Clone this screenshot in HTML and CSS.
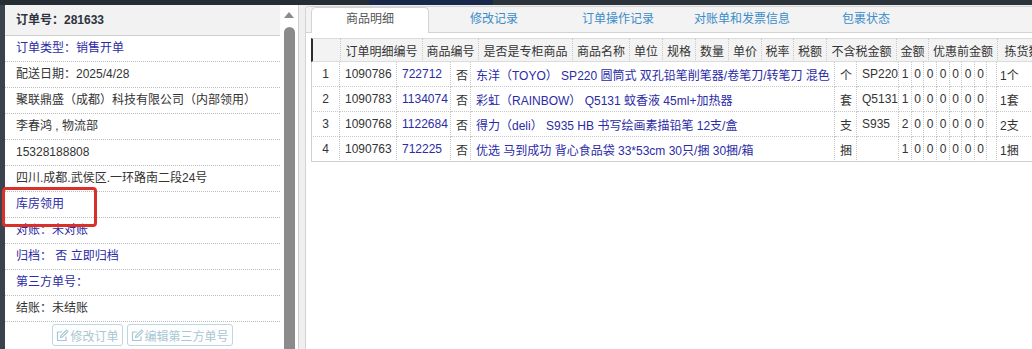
FILE: index.html
```html
<!DOCTYPE html>
<html lang="zh-CN">
<head>
<meta charset="utf-8">
<title>订单详情</title>
<link rel="stylesheet" href="styles.css">
</head>
<body>
<div class="topbar"><span class="seg-a"></span><span class="seg-b"></span><span class="seg-c"></span></div>
<div class="main">
  <div class="strip"></div>
  <aside class="sidebar">
    <div class="row head">订单号：281633</div>
    <div class="row blue">订单类型：销售开单</div>
    <div class="row">配送日期：2025/4/28</div>
    <div class="row">聚联鼎盛（成都）科技有限公司（内部领用）</div>
    <div class="row">李春鸿 , 物流部</div>
    <div class="row">15328188808</div>
    <div class="row">四川.成都.武侯区.一环路南二段24号</div>
    <div class="row blue">库房领用</div>
    <div class="row blue">对账：未对账</div>
    <div class="row blue">归档： 否 立即归档</div>
    <div class="row blue">第三方单号：</div>
    <div class="row">结账：未结账</div>
    <div class="row btns">
      <button class="btn" type="button"><svg class="ico" width="13" height="13" viewBox="0 0 13 13"><path d="M10 7.5V11.5H1.5V3H6" fill="none" stroke="currentColor" stroke-width="1.2"/><path d="M4.5 8.5L5 6.5L10.5 1L12 2.5L6.5 8Z" fill="none" stroke="currentColor" stroke-width="1.1"/></svg>修改订单</button>
      <button class="btn" type="button"><svg class="ico" width="13" height="13" viewBox="0 0 13 13"><path d="M10 7.5V11.5H1.5V3H6" fill="none" stroke="currentColor" stroke-width="1.2"/><path d="M4.5 8.5L5 6.5L10.5 1L12 2.5L6.5 8Z" fill="none" stroke="currentColor" stroke-width="1.1"/></svg>编辑第三方单号</button>
    </div>
  </aside>
  <div class="scrollbar"><span class="arrow"></span><span class="thumb"></span></div>
  <div class="divider"></div>
  <section class="content">
    <div class="panel">
      <ul class="tabnav">
        <li class="active">商品明细</li>
        <li>修改记录</li>
        <li>订单操作记录</li>
        <li>对账单和发票信息</li>
        <li>包裹状态</li>
      </ul>
      <div class="grid">
        <table class="ghead">
          <colgroup>
            <col class="w30"><col class="w82"><col class="w56"><col class="w94"><col class="w57"><col class="w33"><col class="w33"><col class="w33"><col class="w33"><col class="w32"><col class="w33"><col class="w70"><col class="w32"><col class="w69"><col class="w62">
          </colgroup>
          <tr>
            <th></th><th>订单明细编号</th><th>商品编号</th><th>是否是专柜商品</th><th>商品名称</th><th>单位</th><th>规格</th><th>数量</th><th>单价</th><th>税率</th><th>税额</th><th>不含税金额</th><th>金额</th><th>优惠前金额</th><th>拣货数量</th>
          </tr>
        </table>
        <table class="gbody">
          <colgroup>
            <col class="w29"><col class="w57"><col class="w54"><col class="w20"><col class="w364"><col class="w22"><col class="w42"><col class="w13"><col class="w12"><col class="w13"><col class="w13"><col class="w12"><col class="w13"><col class="w12"><col class="w10"><col class="w60">
          </colgroup>
          <tr>
            <td class="rn">1</td><td>1090786</td><td class="link">722712</td><td>否</td><td class="link">东洋（TOYO） SP220 圆筒式 双孔铅笔削笔器/卷笔刀/转笔刀 混色</td><td>个</td><td>SP220</td><td class="num">1</td><td class="num">0</td><td class="num">0</td><td class="num">0</td><td class="num">0</td><td class="num">0</td><td class="num">0</td><td class="num"></td><td class="last">1个</td>
          </tr>
          <tr>
            <td class="rn">2</td><td>1090783</td><td class="link">1134074</td><td>否</td><td class="link">彩虹（RAINBOW） Q5131 蚊香液 45ml+加热器</td><td>套</td><td>Q5131</td><td class="num">1</td><td class="num">0</td><td class="num">0</td><td class="num">0</td><td class="num">0</td><td class="num">0</td><td class="num">0</td><td class="num"></td><td class="last">1套</td>
          </tr>
          <tr>
            <td class="rn">3</td><td>1090768</td><td class="link">1122684</td><td>否</td><td class="link">得力（deli） S935 HB 书写绘画素描铅笔 12支/盒</td><td>支</td><td>S935</td><td class="num">2</td><td class="num">0</td><td class="num">0</td><td class="num">0</td><td class="num">0</td><td class="num">0</td><td class="num">0</td><td class="num"></td><td class="last">2支</td>
          </tr>
          <tr>
            <td class="rn">4</td><td>1090763</td><td class="link">712225</td><td>否</td><td class="link">优选 马到成功 背心食品袋 33*53cm 30只/捆 30捆/箱</td><td>捆</td><td></td><td class="num">1</td><td class="num">0</td><td class="num">0</td><td class="num">0</td><td class="num">0</td><td class="num">0</td><td class="num">0</td><td class="num"></td><td class="last">1捆</td>
          </tr>
        </table>
      </div>
    </div>
  </section>
  <div class="highlight"></div>
</div>
</body>
</html>
```

FILE: styles.css
```css
* { box-sizing: border-box; }
html, body { margin: 0; padding: 0; }
body {
  width: 1032px;
  height: 349px;
  overflow: hidden;
  background: #fff;
  color: #333;
  font-family: "Liberation Sans", "Noto Sans CJK SC", sans-serif;
  font-size: 12px;
}

/* top dark bar */
.topbar { display: flex; height: 5px; }
.topbar .seg-a { width: 369px; background: #262d35; }
.topbar .seg-b { width: 124px; background: #17284a; }
.topbar .seg-c { flex: 1; background: #2c333b; }

.main { display: flex; height: 344px; position: relative; }
.strip { width: 5px; background: #3a434d; }

/* left info panel */
.sidebar { width: 275px; background: #fff; }
.row {
  height: 26px;
  line-height: 25px;
  padding-left: 11px;
  border-bottom: 1px dotted #bdbdbd;
  white-space: nowrap;
  overflow: hidden;
}
.row.head {
  height: 31px;
  line-height: 30px;
  background: #f2f2f2;
  border-bottom: 1px solid #cfcfcf;
  font-weight: bold;
  color: #2e3440;
}
.blue { color: #2b2ba6; }
.row.btns {
  display: flex;
  justify-content: center;
  align-items: center;
  gap: 4px;
  padding: 0;
  border-bottom: 0;
}
.btn {
  display: inline-flex;
  align-items: center;
  gap: 1px;
  height: 22px;
  padding: 0 3px;
  border: 1px solid #bcd7e2;
  border-radius: 3px;
  background: #fff;
  color: #a7c7d4;
  font-family: "Liberation Sans", "Noto Sans CJK SC", sans-serif;
  font-size: 12px;
}
.ico { display: block; }

.highlight {
  position: absolute;
  left: 2px;
  top: 182px;
  width: 95px;
  height: 40px;
  border: 3px solid #d9302a;
  border-radius: 4px;
  pointer-events: none;
}

/* fake scrollbar */
.scrollbar {
  width: 18px;
  display: flex;
  flex-direction: column;
  align-items: center;
  padding-top: 7px;
  background: #fff;
}
.arrow {
  width: 0;
  height: 0;
  border-left: 5.5px solid transparent;
  border-right: 5.5px solid transparent;
  border-bottom: 6px solid #8b8b8b;
}
.thumb {
  margin-top: 9px;
  width: 11px;
  flex: 1;
  background: #8b8b8b;
  border-radius: 6px 6px 0 0;
}
.divider { width: 1px; background: #d0d0d0; }

/* right content */
.content {
  flex: 1;
  min-width: 0;
  background: #efefef;
  padding: 1px 0 0 6px;
  overflow: hidden;
}
.panel {
  height: 100%;
  background: #fff;
  border: 1px solid #d3d3d3;
  border-right: 0;
  border-bottom: 0;
  border-radius: 4px 0 0 0;
  overflow: hidden;
}
.tabnav {
  display: flex;
  align-items: flex-end;
  gap: 6px;
  list-style: none;
  margin: 0;
  padding: 0 0 0 5px;
  height: 26px;
  background: #f3f3f3;
  border-bottom: 1px solid #d3d3d3;
}
.tabnav li {
  width: 118px;
  height: 26px;
  margin-bottom: -1px;
  line-height: 22px;
  text-align: center;
  border: 1px solid transparent;
  border-bottom: 0;
  border-radius: 5px 5px 0 0;
  color: #3a8cc8;
}
.tabnav li.active {
  background: #fff;
  border-color: #d3d3d3;
  color: #555;
}

.grid { margin: 5px 0 0 5px; }
.ghead, .gbody {
  table-layout: fixed;
  border-collapse: separate;
  border-spacing: 0;
}
.ghead { width: 749px; }
.gbody { width: 746px; }
.ghead th {
  height: 24px;
  padding: 0;
  font-weight: normal;
  text-align: center;
  background: #f3f3f3;
  border-top: 1px solid #dcdcdc;
  border-bottom: 1px solid #dcdcdc;
  border-right: 1px dotted #c8c8c8;
  white-space: nowrap;
  overflow: hidden;
}
.ghead th:first-child { border-left: 2px solid #2b2b2b; }

.gbody td {
  height: 25px;
  padding: 0 0 0 5px;
  border-right: 1px dotted #c8c8c8;
  border-bottom: 1px dotted #c8c8c8;
  white-space: nowrap;
  overflow: hidden;
}
.gbody tr:last-child td { border-bottom: 1px solid #d0d0d0; }
.gbody td.rn { border-left: 1px solid #d0d0d0; padding: 0; text-align: center; }
.gbody td.num { padding: 0; text-align: center; }
.gbody td.last { padding-left: 3px; }
.link { color: #2b2ba6; }

.w10 { width: 10px; } .w12 { width: 12px; } .w13 { width: 13px; }
.w20 { width: 20px; } .w22 { width: 22px; } .w29 { width: 29px; }
.w30 { width: 30px; } .w32 { width: 32px; } .w33 { width: 33px; }
.w42 { width: 42px; } .w54 { width: 54px; } .w56 { width: 56px; }
.w57 { width: 57px; } .w60 { width: 60px; } .w62 { width: 62px; }
.w69 { width: 69px; } .w70 { width: 70px; } .w82 { width: 82px; }
.w94 { width: 94px; } .w364 { width: 364px; }
```
